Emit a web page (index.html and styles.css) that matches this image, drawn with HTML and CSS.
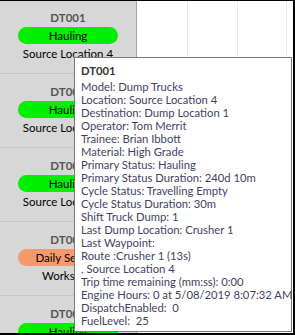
FILE: index.html
```html
<!DOCTYPE html>
<html lang="en">
<head>
    <meta charset="UTF-8">
    <title>Truck board</title>
    <link rel="stylesheet" href="styles.css">
</head>
<body>
    <main class="board">
        <section class="trucks">
            <div class="truck">
                <div class="truck__name">DT001</div>
                <div class="truck__status status--hauling">Hauling</div>
                <div class="truck__place">Source Location 4</div>
            </div>
            <div class="truck">
                <div class="truck__name">DT002</div>
                <div class="truck__status status--hauling">Hauling</div>
                <div class="truck__place">Source Location 2</div>
            </div>
            <div class="truck">
                <div class="truck__name">DT003</div>
                <div class="truck__status status--hauling">Hauling</div>
                <div class="truck__place">Source Location 1</div>
            </div>
            <div class="truck">
                <div class="truck__name">DT004</div>
                <div class="truck__status status--service">Daily Service</div>
                <div class="truck__place">Workshop</div>
            </div>
            <div class="truck">
                <div class="truck__name">DT005</div>
                <div class="truck__status status--hauling">Hauling</div>
                <div class="truck__place">Source Location 3</div>
            </div>
        </section>
        <section class="timeline">
            <div class="timeline__col"></div>
            <div class="timeline__col"></div>
            <div class="timeline__col"></div>
        </section>

        <div class="tooltip">
            <div class="tooltip__title">DT001</div>
            <div>Model: Dump Trucks</div>
            <div>Location: Source Location 4</div>
            <div>Destination: Dump Location 1</div>
            <div>Operator: Tom Merrit</div>
            <div>Trainee: Brian Ibbott</div>
            <div>Material: High Grade</div>
            <div>Primary Status: Hauling</div>
            <div>Primary Status Duration: 240d 10m</div>
            <div>Cycle Status: Travelling Empty</div>
            <div>Cycle Status Duration: 30m</div>
            <div>Shift Truck Dump: 1</div>
            <div>Last Dump Location: Crusher 1</div>
            <div>Last Waypoint:</div>
            <div>Route :Crusher 1 (13s)</div>
            <div>, Source Location 4</div>
            <div>Trip time remaining (mm:ss): 0:00</div>
            <div>Engine Hours: 0 at 5/08/2019 8:07:32 AM</div>
            <div>DispatchEnabled:&nbsp; 0</div>
            <div>FuelLevel:&nbsp; 25</div>
        </div>
    </main>
</body>
</html>
```

FILE: styles.css
```css
*,
*::after,
*::before {
  box-sizing: border-box;
  margin: 0;
  padding: 0;
}

body {
  font-family: 'Lato', sans-serif;
  font-size: 12px;
  background: #fff;
  overflow: hidden;
}

.board {
  position: relative;
  display: flex;
  width: 295px;
  height: 335px;
  border-top: 1px solid #000;
  border-right: 2px solid #000;
  border-bottom: 2px solid #000;
  overflow: hidden;
}

.trucks {
  width: 137px;
  flex-shrink: 0;
  margin-top: -1px;
  background: #d7d7d7;
  border-right: 1px solid #a3a3a3;
  font-size: 11.5px;
}

.truck {
  height: 74px;
  padding-top: 10px;
  display: flex;
  flex-direction: column;
  align-items: center;
  border-bottom: 1px solid #c6c6c6;
}

.truck__name {
  font-weight: bold;
  color: #555;
  line-height: 15px;
}

.truck__status {
  width: 100px;
  height: 17px;
  margin-top: 2px;
  border-radius: 9px;
  text-align: center;
  line-height: 17px;
  color: #000;
  white-space: nowrap;
  overflow: hidden;
}

.status--hauling {
  background: #00f000;
}

.status--service {
  background: #f79a6b;
}

.truck__place {
  margin-top: 3px;
  line-height: 14px;
  color: #000;
}

.timeline {
  display: flex;
  flex: 1;
}

.timeline__col {
  width: 51px;
  border-right: 1px solid #e8e8e8;
}

.timeline__col:nth-child(2) {
  width: 50px;
}

.timeline__col:nth-child(3) {
  width: 49px;
}

.tooltip {
  position: absolute;
  left: 74px;
  top: 56px;
  width: 218px;
  height: 275px;
  padding: 6px 6px;
  background: #fff;
  border: 1px solid #7a7a7a;
  color: #3f3f66;
  font-size: 11.25px;
  line-height: 13px;
  white-space: nowrap;
}

.tooltip__title {
  font-weight: bold;
  color: #333;
  line-height: 14px;
  margin-bottom: 2px;
}
```
